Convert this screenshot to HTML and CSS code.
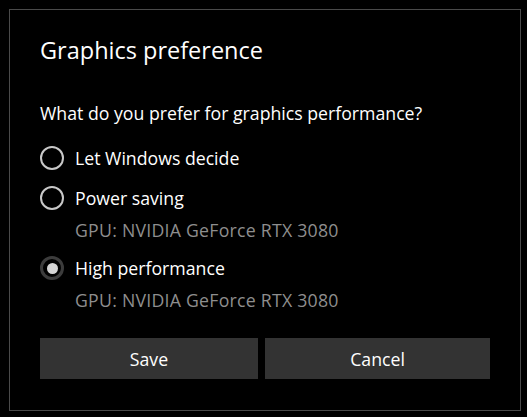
FILE: index.html
```html
<!DOCTYPE html>
<html>
<head>
<meta charset="utf-8">
<link rel="stylesheet" href="styles.css">
</head>
<body>
<div class="dialog">
  <h1 class="title">Graphics preference</h1>
  <p class="question">What do you prefer for graphics performance?</p>
  <div class="options">
    <label class="option">
      <span class="radio"></span>
      <span class="label">Let Windows decide</span>
    </label>
    <label class="option">
      <span class="radio"></span>
      <span class="label">Power saving</span>
    </label>
    <div class="gpu">GPU: NVIDIA GeForce RTX 3080</div>
    <label class="option">
      <span class="radio checked"></span>
      <span class="label">High performance</span>
    </label>
    <div class="gpu">GPU: NVIDIA GeForce RTX 3080</div>
  </div>
  <div class="buttons">
    <button class="btn save">Save</button>
    <button class="btn cancel">Cancel</button>
  </div>
</div>
</body>
</html>
```
FILE: styles.css
```css
html, body {
  margin: 0;
  padding: 0;
  background: #000;
}
body {
  font-family: "Open Sans", "Noto Sans", sans-serif;
  color: #fff;
  width: 527px;
  height: 417px;
  overflow: hidden;
}
.dialog {
  box-sizing: border-box;
  margin: 9px 0 0 9px;
  width: 512px;
  height: 402px;
  border: 1px solid #4a4a4a;
  padding: 0 0 0 30px;
  display: flex;
  flex-direction: column;
}
.title {
  margin: 0;
  margin-top: 24px;
  font-size: 23.5px;
  font-weight: 400;
  line-height: 32px;
}
.question {
  margin: 0;
  margin-top: 35px;
  font-size: 17.7px;
  line-height: 24px;
}
.options {
  display: flex;
  flex-direction: column;
  margin-top: 13px;
}
.option {
  display: flex;
  align-items: center;
  height: 40px;
}
.radio {
  box-sizing: border-box;
  width: 24px;
  height: 24px;
  border: 2px solid #c8c8c8;
  border-radius: 50%;
  margin-right: 11px;
  display: flex;
  align-items: center;
  justify-content: center;
}
.radio.checked {
  border: 3px solid #3c3c3c;
}
.radio.checked::after {
  content: "";
  width: 11px;
  height: 11px;
  border-radius: 50%;
  background: #d4d4d4;
}
.label {
  font-size: 17.7px;
}
.gpu {
  font-size: 17.7px;
  color: #8e8e8e;
  padding-left: 35px;
  line-height: 24px;
  letter-spacing: 0.25px;
  margin-bottom: 6px;
}
.gpu:last-child {
  margin-bottom: 0;
}
.buttons {
  display: flex;
  gap: 7px;
  margin-top: 26px;
}
.btn {
  height: 41px;
  border: none;
  background: #333;
  color: #fff;
  font-family: inherit;
  font-size: 17.7px;
  padding: 0;
}
.save { width: 218px; }
.cancel { width: 225px; }
```
